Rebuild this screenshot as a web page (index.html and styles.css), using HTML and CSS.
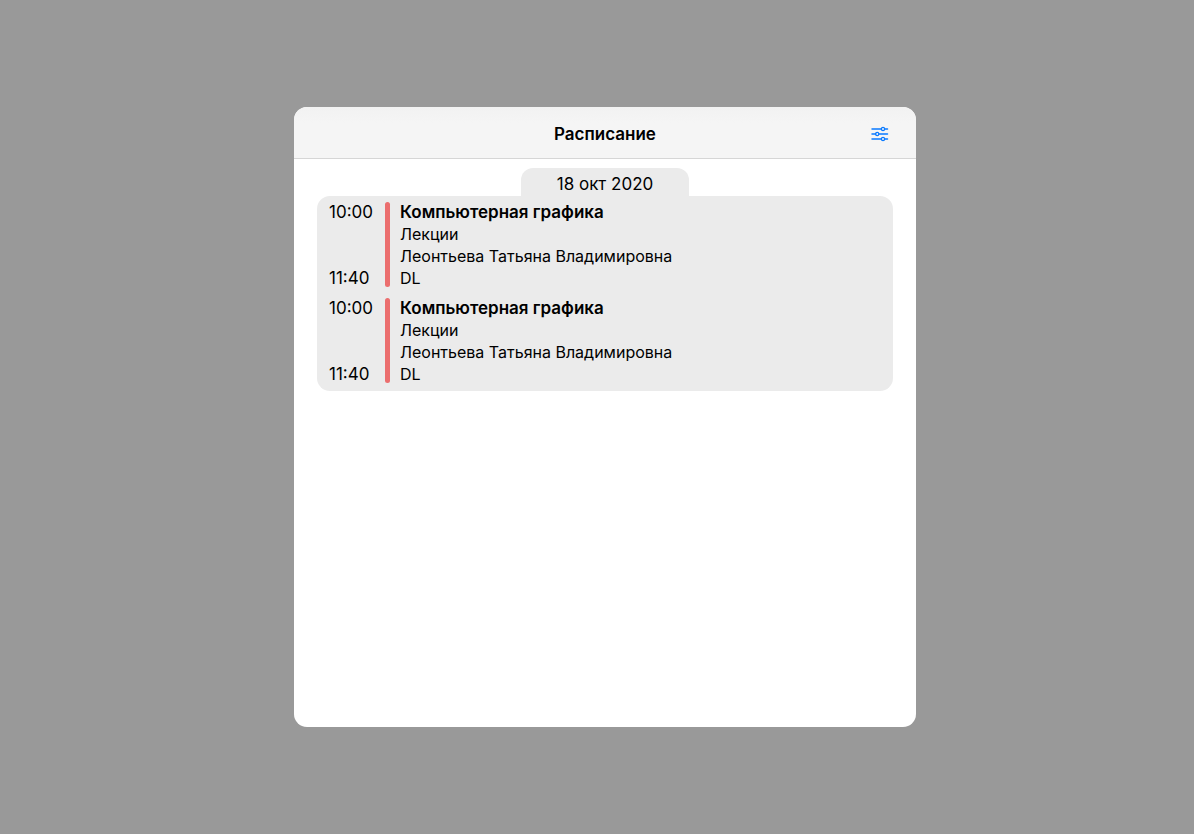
FILE: index.html
```
<!DOCTYPE html>
<html lang="ru">
<head>
<meta charset="utf-8">
<meta name="viewport" content="width=device-width, initial-scale=1">
<title>Расписание</title>
<link rel="stylesheet" href="styles.css">
</head>
<body>
<main class="sheet">
  <header class="bar">
    <h1 class="title">Расписание</h1>
    <button class="filter" type="button" aria-label="Фильтры">
      <svg width="18" height="16" viewBox="0 0 18 16" fill="none" stroke="currentColor" stroke-width="1.5" stroke-linecap="round">
        <path d="M1 3h9.200M13.800 3h2.700M1 8h3.700M8 8h8.500M1 13h9.200M13.800 13h2.700"/>
        <g stroke-width="1.200"><circle cx="12" cy="3" r="1.600"/><circle cx="6.200" cy="8" r="1.600"/><circle cx="12" cy="13" r="1.600"/></g>
      </svg>
    </button>
  </header>
  <section class="day">
    <h2 class="date">18 окт 2020</h2>
    <ul class="lessons">
      <li class="lesson">
        <div class="times"><time>10:00</time><time>11:40</time></div>
        <div class="info"><h3 class="subject">Компьютерная графика</h3><p>Лекции</p><p>Леонтьева Татьяна Владимировна</p><p>DL</p></div>
      </li>
      <li class="lesson">
        <div class="times"><time>10:00</time><time>11:40</time></div>
        <div class="info"><h3 class="subject">Компьютерная графика</h3><p>Лекции</p><p>Леонтьева Татьяна Владимировна</p><p>DL</p></div>
      </li>
    </ul>
  </section>
</main>
</body>
</html>
```
FILE: styles.css
```
* { box-sizing: border-box; margin: 0; padding: 0; }
body {
  min-height: 100vh;
  padding: 107px 278px 107px 294px;
  display: flex;
  background: #999;
  color: #000;
  font: 17px/22px Inter, sans-serif;
}
.sheet { flex: 1; background: #fff; border-radius: 13px; overflow: hidden; }
.bar {
  display: grid;
  grid-template-columns: 1fr auto 1fr;
  align-items: center;
  padding: 16px 27px 13px;
  background: linear-gradient(#f2f2f2, #f5f5f5 16px);
  border-bottom: 1px solid #d6d6d6;
}
.title { grid-column: 2; font-size: 17px; font-weight: 600; }
.filter {
  justify-self: end;
  display: flex;
  border: 0;
  background: none;
  color: #0a7aff;
  cursor: pointer;
}
.day { display: flex; flex-direction: column; padding: 9px 23px; }
.date {
  align-self: center;
  padding: 5px 36px 1px;
  background: #ebebeb;
  border-radius: 12px 12px 0 0;
  font-size: 17px;
  font-weight: 400;
}
.lessons {
  display: flex;
  flex-direction: column;
  gap: 8px;
  padding: 5px 12px 6px;
  background: #ebebeb;
  border-radius: 13px;
  list-style: none;
}
.lesson { display: flex; }
.times {
  display: flex;
  flex-direction: column;
  justify-content: space-between;
  width: 56px;
}
.info { flex: 1; position: relative; padding-left: 15px; font-size: 16px; }
.info::before {
  content: "";
  position: absolute;
  inset: 1px auto 2px 0;
  width: 5px;
  border-radius: 3px;
  background: #eb6e6e;
}
.subject { font-size: 17px; font-weight: 600; }
```
